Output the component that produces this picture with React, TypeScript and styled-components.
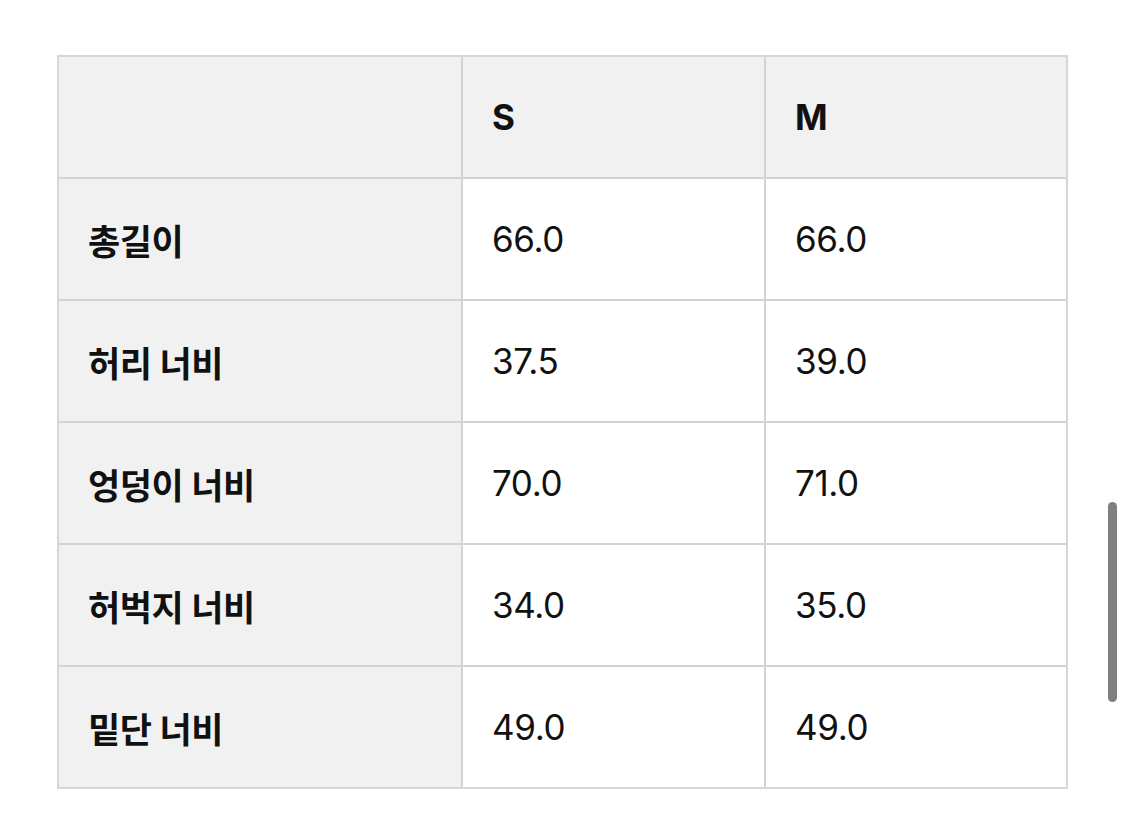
import { Fragment } from "react";
import styled, { createGlobalStyle } from "styled-components";

const GlobalStyle = createGlobalStyle`
  html, body {
    margin: 0;
    padding: 0;
    background: #ffffff;
  }
  body {
    font-family: Inter, "Noto Sans CJK KR", sans-serif;
    color: #111111;
  }
`;

const Page = styled.div`
  position: relative;
  width: 1125px;
  height: 834px;
  padding: 55px 0 0 57px;
  box-sizing: border-box;
  overflow: hidden;
`;

const Table = styled.div`
  display: grid;
  grid-template-columns: 402px 301px 300px;
  grid-auto-rows: 120px;
  gap: 2px;
  width: max-content;
  border: 2px solid #d6d6d6;
  background: #d3d3d3;
`;

const Cell = styled.div<{ $shade?: boolean; $bold?: boolean }>`
  display: flex;
  align-items: center;
  padding-left: 29px;
  background: ${(p) => (p.$shade ? "#f1f1f1" : "#ffffff")};
  font-size: 35px;
  font-weight: ${(p) => (p.$bold ? 700 : 400)};
  letter-spacing: -0.4px;
`;

const Scrollbar = styled.div`
  position: absolute;
  left: 1108px;
  top: 502px;
  width: 9px;
  height: 200px;
  border-radius: 5px;
  background: #7f7f7f;
`;

const rows = [
  { label: "총길이", s: "66.0", m: "66.0" },
  { label: "허리 너비", s: "37.5", m: "39.0" },
  { label: "엉덩이 너비", s: "70.0", m: "71.0" },
  { label: "허벅지 너비", s: "34.0", m: "35.0" },
  { label: "밑단 너비", s: "49.0", m: "49.0" },
];

export default function App() {
  return (
    <Page>
      <GlobalStyle />
      <Table>
        <Cell $shade />
        <Cell $shade $bold>S</Cell>
        <Cell $shade $bold>M</Cell>
        {rows.map((r) => (
          <Fragment key={r.label}>
            <Cell $shade $bold>
              {r.label}
            </Cell>
            <Cell>{r.s}</Cell>
            <Cell>{r.m}</Cell>
          </Fragment>
        ))}
      </Table>
      <Scrollbar />
    </Page>
  );
}
